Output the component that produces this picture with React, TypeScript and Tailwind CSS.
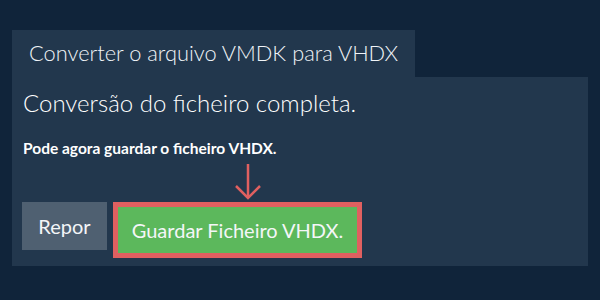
import React from "react";

export default function App() {
  return (
    <div
      className="w-[600px] h-[300px] bg-[#10243a] pt-[30px] pl-[12px] overflow-hidden"
      style={{ fontFamily: "Lato, 'Open Sans', sans-serif" }}
    >
      <div className="inline-flex h-[47px] items-center bg-[#22374d] pl-[17px] pr-[17px] text-[21.8px] font-light text-[#f0f4f8]">
        Converter o arquivo VMDK para VHDX
      </div>
      <div className="w-[576px] h-[189px] bg-[#22374d] pl-[11px] pt-[10px] flex flex-col">
        <div className="text-[24px] leading-[32px] font-light text-white">Conversão do ficheiro completa.</div>
        <div className="mt-[19px] text-[15.5px] font-bold leading-[20px] text-white">
          Pode agora guardar o ficheiro VHDX.
        </div>
        <div className="relative mt-[44px] -ml-[1px] flex items-start gap-[6px]">
          <svg
            className="absolute left-[211px] top-[-38px]"
            width="30"
            height="36"
            viewBox="0 0 30 36"
            fill="none"
            stroke="#e06060"
            strokeWidth="2.5"
          >
            <path d="M15 0 V34" />
            <path d="M3 22 L15 34 L27 22" />
          </svg>
          <button className="h-[48px] w-[85px] bg-[#4f6071] text-[20px] text-[#f4f6f8]">Repor</button>
          <div className="h-[56px] w-[249px] border-[5px] border-[#e06060] bg-[#5cb85c] flex items-center justify-center text-[20px] text-[#f4f6f8]">
            Guardar Ficheiro VHDX.
          </div>
        </div>
      </div>
    </div>
  );
}
